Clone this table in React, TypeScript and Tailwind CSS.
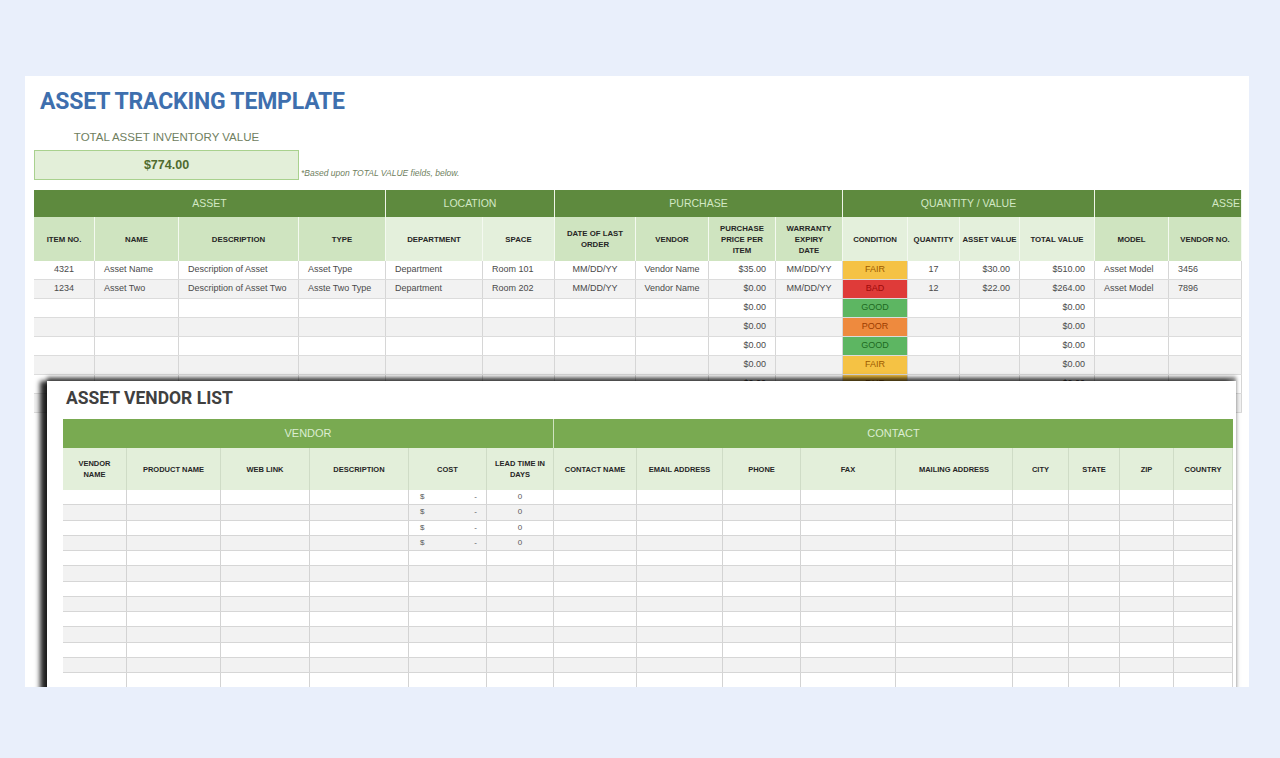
import React from "react";

type Al = "l" | "c" | "r";
const alignCls: Record<Al, string> = {
  l: "justify-start text-left",
  c: "justify-center text-center",
  r: "justify-end text-right",
};

const topCols: { w: string; label: string[]; dark: boolean; a: Al }[] = [
  { w: "w-[61px]", label: ["ITEM NO."], dark: true, a: "c" },
  { w: "w-[84px]", label: ["NAME"], dark: true, a: "l" },
  { w: "w-[120px]", label: ["DESCRIPTION"], dark: true, a: "l" },
  { w: "w-[87px]", label: ["TYPE"], dark: true, a: "l" },
  { w: "w-[97px]", label: ["DEPARTMENT"], dark: false, a: "l" },
  { w: "w-[72px]", label: ["SPACE"], dark: false, a: "l" },
  { w: "w-[81px]", label: ["DATE OF LAST", "ORDER"], dark: true, a: "c" },
  { w: "w-[73px]", label: ["VENDOR"], dark: true, a: "c" },
  { w: "w-[67px]", label: ["PURCHASE", "PRICE PER", "ITEM"], dark: true, a: "r" },
  { w: "w-[67px]", label: ["WARRANTY", "EXPIRY", "DATE"], dark: true, a: "c" },
  { w: "w-[65px]", label: ["CONDITION"], dark: false, a: "c" },
  { w: "w-[52px]", label: ["QUANTITY"], dark: false, a: "c" },
  { w: "w-[60px]", label: ["ASSET VALUE"], dark: false, a: "r" },
  { w: "w-[75px]", label: ["TOTAL VALUE"], dark: false, a: "r" },
  { w: "w-[74px]", label: ["MODEL"], dark: true, a: "l" },
  { w: "w-[73px]", label: ["VENDOR NO."], dark: true, a: "l" },
];

const topGroups = [
  { w: "w-[352px]", label: "ASSET", extra: "justify-center" },
  { w: "w-[169px]", label: "LOCATION", extra: "justify-center" },
  { w: "w-[288px]", label: "PURCHASE", extra: "justify-center" },
  { w: "w-[252px]", label: "QUANTITY / VALUE", extra: "justify-center" },
  { w: "w-[147px]", label: "ASSET", extra: "justify-start pl-[117px]" },
];

const topRows: string[][] = [
  ["4321", "Asset Name", "Description of Asset", "Asset Type", "Department", "Room 101", "MM/DD/YY", "Vendor Name", "$35.00", "MM/DD/YY", "FAIR", "17", "$30.00", "$510.00", "Asset Model", "3456"],
  ["1234", "Asset Two", "Description of Asset Two", "Asste Two Type", "Department", "Room 202", "MM/DD/YY", "Vendor Name", "$0.00", "MM/DD/YY", "BAD", "12", "$22.00", "$264.00", "Asset Model", "7896"],
  ["", "", "", "", "", "", "", "", "$0.00", "", "GOOD", "", "", "$0.00", "", ""],
  ["", "", "", "", "", "", "", "", "$0.00", "", "POOR", "", "", "$0.00", "", ""],
  ["", "", "", "", "", "", "", "", "$0.00", "", "GOOD", "", "", "$0.00", "", ""],
  ["", "", "", "", "", "", "", "", "$0.00", "", "FAIR", "", "", "$0.00", "", ""],
  ["", "", "", "", "", "", "", "", "$0.00", "", "FAIR", "", "", "$0.00", "", ""],
  ["", "", "", "", "", "", "", "", "$0.00", "", "GOOD", "", "", "$0.00", "", ""],
];

const condCls: Record<string, string> = {
  FAIR: "bg-[#f5c244] text-[#9c5a00]",
  BAD: "bg-[#df3b39] text-[#9c0a0a]",
  GOOD: "bg-[#5db662] text-[#1d6a1f]",
  POOR: "bg-[#ee8a3e] text-[#9c3c00]",
};

const vendCols: { w: string; label: string[] }[] = [
  { w: "w-[64px]", label: ["VENDOR", "NAME"] },
  { w: "w-[94px]", label: ["PRODUCT NAME"] },
  { w: "w-[89px]", label: ["WEB LINK"] },
  { w: "w-[99px]", label: ["DESCRIPTION"] },
  { w: "w-[78px]", label: ["COST"] },
  { w: "w-[67px]", label: ["LEAD TIME IN", "DAYS"] },
  { w: "w-[83px]", label: ["CONTACT NAME"] },
  { w: "w-[86px]", label: ["EMAIL ADDRESS"] },
  { w: "w-[78px]", label: ["PHONE"] },
  { w: "w-[95px]", label: ["FAX"] },
  { w: "w-[117px]", label: ["MAILING ADDRESS"] },
  { w: "w-[56px]", label: ["CITY"] },
  { w: "w-[51px]", label: ["STATE"] },
  { w: "w-[54px]", label: ["ZIP"] },
  { w: "w-[59px]", label: ["COUNTRY"] },
];

function TopSheet() {
  return (
    <div className="pl-[9px]">
      <div className="pt-[12px] pl-[6px] font-['Roboto',sans-serif] font-bold text-[23px] leading-[27px] tracking-[-0.2px] text-[#3e6fae]">
        ASSET TRACKING TEMPLATE
      </div>
      <div className="w-[265px] mt-[15px] text-center text-[11.5px] leading-[14px] text-[#6f8060]">
        TOTAL ASSET INVENTORY VALUE
      </div>
      <div className="flex items-end mt-[6px]">
        <div className="w-[265px] h-[30px] border border-[#a9d18e] bg-[#e3efd9] flex items-center justify-center font-bold text-[12.5px] text-[#4f6b2f]">
          $774.00
        </div>
        <div className="ml-[2px] mb-[1px] italic text-[8.5px] leading-[12px] text-[#6f8060]">
          *Based upon TOTAL VALUE fields, below.
        </div>
      </div>
      <div className="mt-[10px] w-[1208px] overflow-hidden">
        <div className="flex h-[27px] bg-[#5e8a3e]">
          {topGroups.map((g, i) => (
            <div
              key={i}
              className={`${g.w} shrink-0 flex items-center ${g.extra} border-r border-[#eef5e8] text-[10.5px] text-[#d3e8c4] whitespace-nowrap overflow-hidden`}
            >
              {g.label}
            </div>
          ))}
        </div>
        <div className="flex h-[44px]">
          {topCols.map((c, i) => (
            <div
              key={i}
              className={`${c.w} shrink-0 flex items-center justify-center text-center border-r border-[#f4f9f0] font-bold text-[7.8px] leading-[11px] text-[#262626] whitespace-nowrap ${
                c.dark ? "bg-[#cfe4c0]" : "bg-[#e4f0dc]"
              }`}
            >
              <div>
                {c.label.map((l, j) => (
                  <div key={j}>{l}</div>
                ))}
              </div>
            </div>
          ))}
        </div>
        {topRows.map((r, ri) => (
          <div
            key={ri}
            className={`flex h-[19px] border-b border-[#dcdcdc] ${ri % 2 === 0 ? "bg-white" : "bg-[#f2f2f2]"}`}
          >
            {r.map((v, ci) => {
              const c = topCols[ci];
              const cond = ci === 10 && v ? condCls[v] : "";
              return (
                <div
                  key={ci}
                  className={`${c.w} shrink-0 flex items-center px-[9px] border-r border-[#d6d6d6] text-[9px] whitespace-nowrap overflow-hidden ${
                    alignCls[c.a]
                  } ${cond ? cond : "text-[#4a4a4a]"}`}
                >
                  {v}
                </div>
              );
            })}
          </div>
        ))}
      </div>
    </div>
  );
}

function VendorSheet() {
  const rows = Array.from({ length: 14 }, (_, i) => i);
  return (
    <div className="absolute left-[22px] top-[305px] w-[1189px] h-[320px] bg-white shadow-[-7px_0_5px_rgba(0,0,0,0.85),0_-4px_4px_rgba(0,0,0,0.55)]">
      <div className="pt-[6px] pl-[19px] font-['Roboto',sans-serif] font-bold text-[17.5px] leading-[22px] text-[#404040]">
        ASSET VENDOR LIST
      </div>
      <div className="mt-[10px] ml-[16px] w-[1170px]">
        <div className="flex h-[29px] bg-[#79aa51]">
          <div className="w-[491px] shrink-0 flex items-center justify-center border-r border-[#cfe3c0] text-[11px] text-[#dcedd2]">
            VENDOR
          </div>
          <div className="w-[679px] shrink-0 flex items-center justify-center text-[11px] text-[#dcedd2]">
            CONTACT
          </div>
        </div>
        <div className="flex h-[42px] bg-[#e3efda]">
          {vendCols.map((c, i) => (
            <div
              key={i}
              className={`${c.w} shrink-0 flex items-center justify-center text-center border-r border-[#cfdcc6] font-bold text-[7.5px] leading-[11px] text-[#262626] whitespace-nowrap`}
            >
              <div>
                {c.label.map((l, j) => (
                  <div key={j}>{l}</div>
                ))}
              </div>
            </div>
          ))}
        </div>
        {rows.map((ri) => (
          <div
            key={ri}
            className={`flex h-[15.25px] border-b border-[#d6d6d6] ${ri % 2 === 0 ? "bg-white" : "bg-[#f2f2f2]"}`}
          >
            {vendCols.map((c, ci) => (
              <div
                key={ci}
                className={`${c.w} shrink-0 flex items-center border-r border-[#d3d3d3] text-[8px] text-[#595959] whitespace-nowrap`}
              >
                {ri < 4 && ci === 4 ? (
                  <div className="w-full flex justify-between pl-[11px] pr-[9px]">
                    <span>$</span>
                    <span>-</span>
                  </div>
                ) : null}
                {ri < 4 && ci === 5 ? <div className="w-full text-center">0</div> : null}
              </div>
            ))}
          </div>
        ))}
      </div>
    </div>
  );
}

export default function App() {
  return (
    <div className="w-[1280px] h-[758px] bg-[#e9effb] pt-[76px] pl-[25px] font-['Liberation_Sans',Arial,sans-serif]">
      <div className="relative w-[1224px] h-[611px] bg-white overflow-hidden">
        <TopSheet />
        <VendorSheet />
      </div>
    </div>
  );
}
